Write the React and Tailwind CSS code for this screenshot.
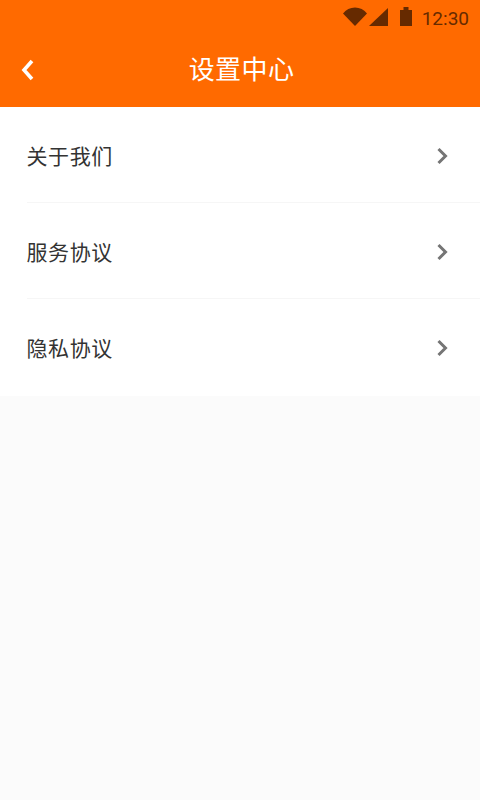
const font = { fontFamily: '"Noto Sans CJK SC", "Liberation Sans", sans-serif' };

function Row({ label, last }) {
  return (
    <div className="pl-[27px] bg-white">
      <div className={`flex items-center justify-between pr-[30px] ${last ? 'h-[97px] pb-[1px]' : 'h-[96px] border-b border-[#f6f6f6]'}`}>
        <span className="text-[21px] leading-[28px] text-[#333333] tracking-[0.6px] -ml-[0.5px]">{label}</span>
        <svg width="14" height="20" viewBox="0 0 14 20" fill="none">
          <path d="M2.5 4 L9.5 11 L2.5 18" stroke="#757575" strokeWidth="3" />
        </svg>
      </div>
    </div>
  );
}

export default function App() {
  return (
    <div className="w-[480px] h-[800px] bg-[#fbfbfb] flex flex-col overflow-hidden" style={font}>
      <div className="h-[107px] bg-[#ff6a00] flex flex-col shrink-0">
        <div className="h-[34px] flex items-center justify-end pr-[11px]">
          <svg width="24" height="20" viewBox="0 0 24 20">
            <path d="M0 6.5 A15 15 0 0 1 24 6.5 L12 19 Z" fill="#662a00" />
          </svg>
          <svg width="19" height="20" viewBox="0 0 19 20" className="ml-[2px]">
            <path d="M0 19 L19 1 L19 19 Z" fill="#662a00" />
          </svg>
          <svg width="12" height="20" viewBox="0 0 12 20" className="ml-[12px]">
            <path d="M0 3 H3.5 V0 H8.5 V3 H12 V19 H0 Z" fill="#662a00" />
          </svg>
          <span className="ml-[10px] mt-[4px] text-[19px] leading-[24px] text-[#662a00]" style={{ fontFamily: 'Roboto, sans-serif' }}>12:30</span>
        </div>
        <div className="h-[73px] relative flex items-center justify-center">
          <svg width="16" height="22" viewBox="0 0 16 22" fill="none" className="absolute left-[20px] top-[25px]">
            <path d="M12 2 L4 11 L12 20" stroke="#ffffff" strokeWidth="3.6" />
          </svg>
          <span className="text-[26px] leading-[32px] text-white mb-[6px] tracking-[0.4px] ml-[3px]">设置中心</span>
        </div>
      </div>
      <Row label="关于我们" />
      <Row label="服务协议" />
      <Row label="隐私协议" last />
    </div>
  );
}
